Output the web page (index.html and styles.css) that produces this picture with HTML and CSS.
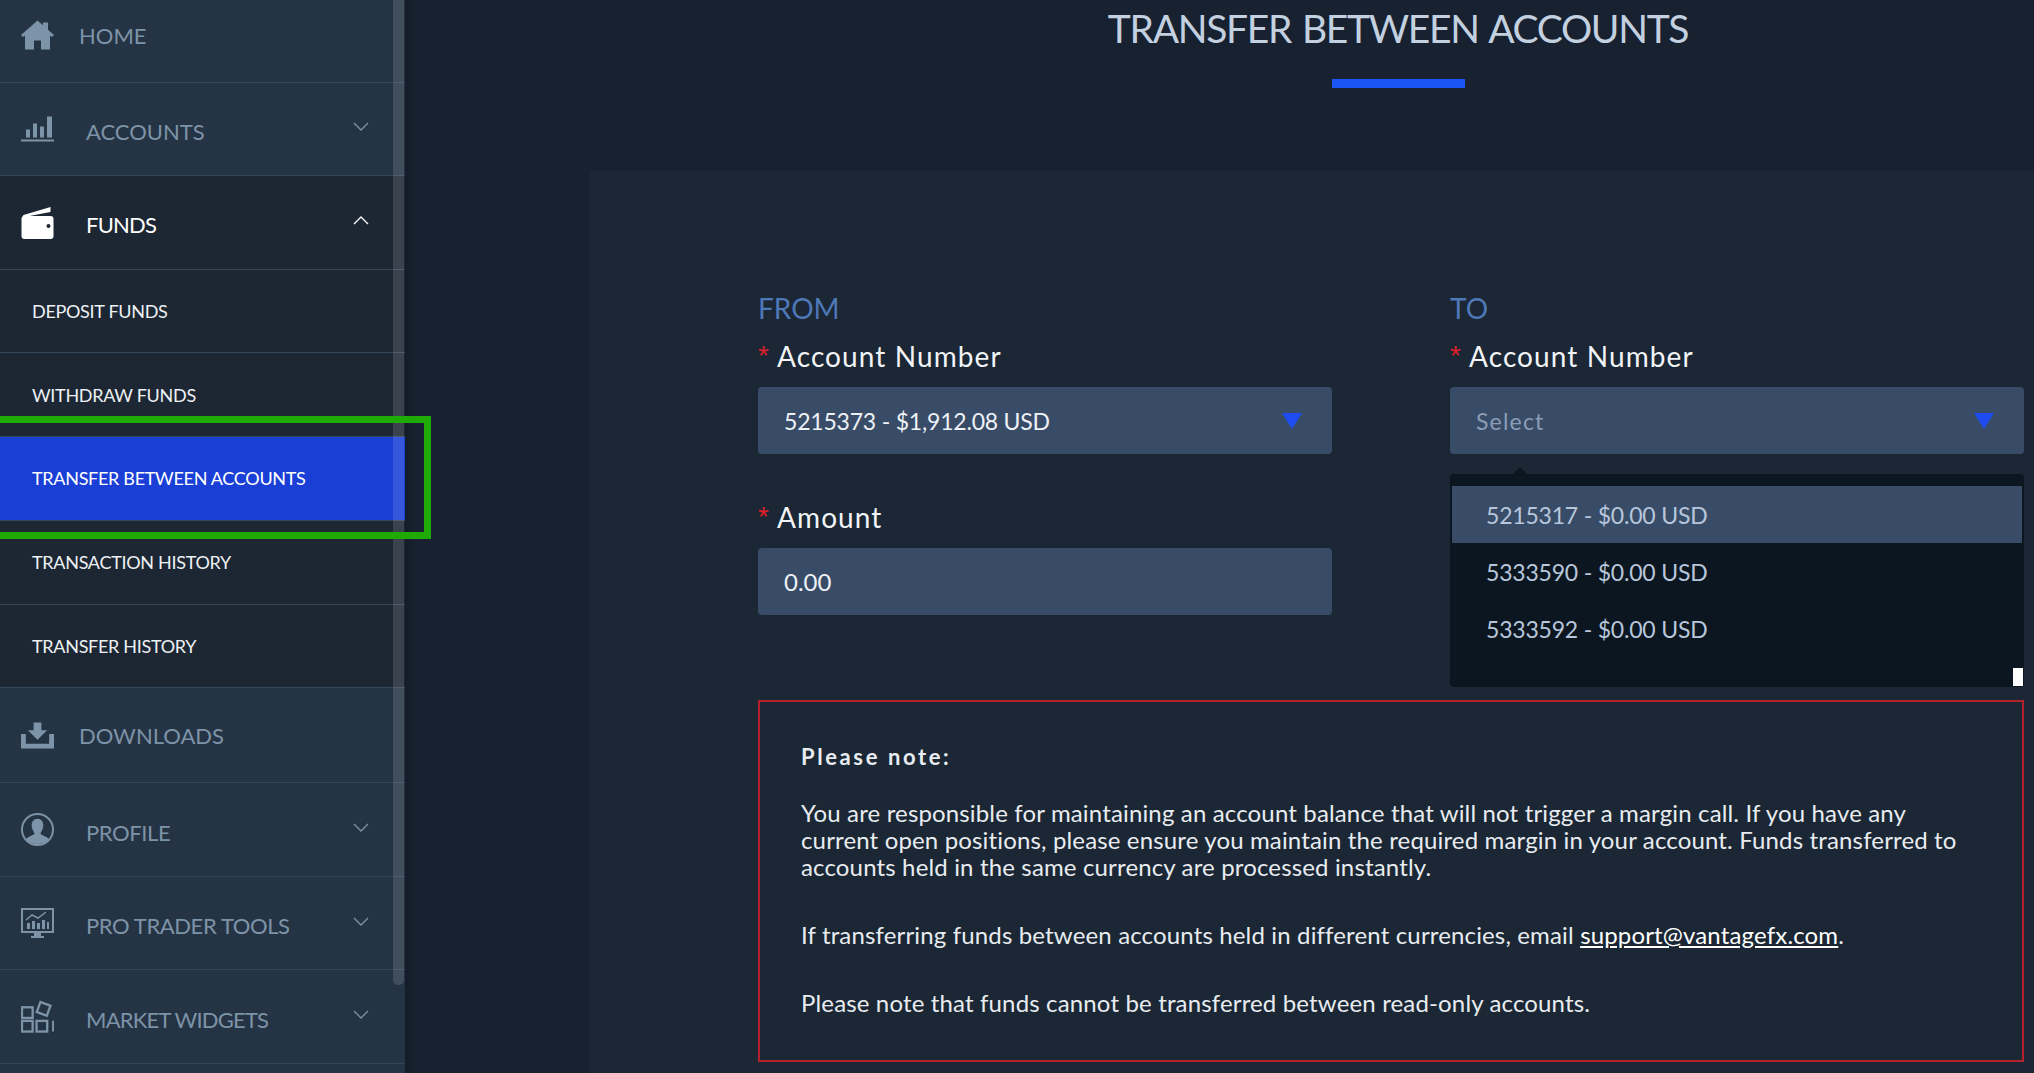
FILE: index.html
```html
<!DOCTYPE html>
<html lang="en">
<head>
    <meta charset="UTF-8">
    <meta name="viewport" content="width=device-width, initial-scale=1.0">
    <title>Transfer Between Accounts</title>
    <link rel="stylesheet" href="styles.css">
</head>
<body>
    <aside class="sidebar">
        <nav class="menu">
            <a class="menu-item menu-home">
                <svg class="menu-icon" viewBox="0 0 33 30"><path d="M16.500 0 L22 4.800 V2 H27 V9.200 L33 14.500 L31 16.500 L29 15 V29 H20 V20 H13 V29 H4 V15 L2 16.500 L0 14.500 Z" fill="currentColor"/></svg>
                <span class="menu-label">HOME</span>
            </a>
            <a class="menu-item">
                <svg class="menu-icon" viewBox="0 0 33 26"><path d="M5 14h4v8H5zM12 8h4v14h-4zM19 11h4v11h-4zM26 1h5v21h-5zM0 24h33v2H0z" fill="currentColor"/></svg>
                <span class="menu-label menu-label-wide">ACCOUNTS</span>
                <svg class="chevron" viewBox="0 0 16 9"><path d="M1 1l7 7 7-7" fill="none" stroke="currentColor" stroke-width="1.300"/></svg>
            </a>
            <a class="menu-item menu-open">
                <svg class="menu-icon" viewBox="0 0 32 33"><path d="M2 9 L29 1 V6 L8 10 H29 a3 3 0 0 1 3 3 V30 a3 3 0 0 1 -3 3 H3 a3 3 0 0 1 -3 -3 V12 Z" fill="currentColor"/><circle cx="27" cy="20" r="2" fill="#1c2733"/></svg>
                <span class="menu-label menu-label-wide menu-label-tight">FUNDS</span>
                <svg class="chevron" viewBox="0 0 16 9"><path d="M1 8l7-7 7 7" fill="none" stroke="currentColor" stroke-width="1.300"/></svg>
            </a>
            <div class="submenu">
                <a class="submenu-item">DEPOSIT FUNDS</a>
                <a class="submenu-item">WITHDRAW FUNDS</a>
                <a class="submenu-item active">TRANSFER BETWEEN ACCOUNTS</a>
                <a class="submenu-item">TRANSACTION HISTORY</a>
                <a class="submenu-item">TRANSFER HISTORY</a>
            </div>
            <a class="menu-item menu-tall">
                <svg class="menu-icon" viewBox="0 0 34 27"><path d="M13 0h8v8h6l-10 10L7 8h6zM0 12h5v10h24V12h5v15H0z" fill="currentColor"/></svg>
                <span class="menu-label">DOWNLOADS</span>
            </a>
            <a class="menu-item">
                <svg class="menu-icon" viewBox="0 0 34 34"><circle cx="17" cy="17" r="16" fill="none" stroke="currentColor" stroke-width="2"/><path d="M17 6c4 0 6 3 6 7s-2 6-3 8c1 2 7 3 9 6-3 3-7 5-12 5s-9-2-12-5c2-3 8-4 9-6-1-2-3-4-3-8s2-7 6-7z" fill="currentColor"/></svg>
                <span class="menu-label menu-label-wide menu-label-narrow">PROFILE</span>
                <svg class="chevron" viewBox="0 0 16 9"><path d="M1 1l7 7 7-7" fill="none" stroke="currentColor" stroke-width="1.300"/></svg>
            </a>
            <a class="menu-item">
                <svg class="menu-icon" viewBox="0 0 33 31"><path d="M0 0h33v25H0zM2 2v21h29V2z" fill="currentColor" fill-rule="evenodd"/><path d="M6 15h3v6H6zM11 13h3v8h-3zM16 15h3v6h-3zM21 12h3v9h-3zM26 14h2v7h-2z" fill="currentColor"/><path d="M5 12l6-5 6 3 8-6" fill="none" stroke="currentColor" stroke-width="1.500"/><path d="M13 25h7v3h3v2H10v-2h3z" fill="currentColor"/></svg>
                <span class="menu-label menu-label-wide menu-label-narrow">PRO TRADER TOOLS</span>
                <svg class="chevron" viewBox="0 0 16 9"><path d="M1 1l7 7 7-7" fill="none" stroke="currentColor" stroke-width="1.300"/></svg>
            </a>
            <a class="menu-item">
                <svg class="menu-icon" viewBox="0 0 34 33"><g fill="none" stroke="currentColor" stroke-width="2.400"><rect x="1" y="7" width="11" height="11"/><rect x="1" y="21" width="11" height="11"/><rect x="16" y="21" width="11" height="11"/><rect x="18" y="3" width="11" height="11" transform="rotate(20 23 8)"/></g><path d="M32 21h2v11h-2z" fill="currentColor"/></svg>
                <span class="menu-label menu-label-wide menu-label-tight">MARKET WIDGETS</span>
                <svg class="chevron" viewBox="0 0 16 9"><path d="M1 1l7 7 7-7" fill="none" stroke="currentColor" stroke-width="1.300"/></svg>
            </a>
        </nav>
        <div class="sidebar-scroll"></div>
        <div class="highlight-box"></div>
    </aside>

    <main class="content">
        <header class="page-head">
            <h1>TRANSFER BETWEEN ACCOUNTS</h1>
            <div class="title-bar"></div>
        </header>

        <section class="card">
            <div class="columns">
                <div class="column">
                    <h2 class="column-title">FROM</h2>
                    <div class="field">
                        <label class="field-label"><span class="star">*</span>Account Number</label>
                        <div class="input select">
                            <span>5215373 - $1,912.08 USD</span>
                            <svg class="caret" viewBox="0 0 20 16"><path d="M0 0h20L10 16z" fill="currentColor"/></svg>
                        </div>
                    </div>
                    <div class="field">
                        <label class="field-label"><span class="star">*</span>Amount</label>
                        <div class="input">0.00</div>
                    </div>
                </div>
                <div class="column column-to">
                    <h2 class="column-title">TO</h2>
                    <div class="field">
                        <label class="field-label"><span class="star">*</span>Account Number</label>
                        <div class="input select placeholder">
                            <span>Select</span>
                            <svg class="caret" viewBox="0 0 20 16"><path d="M0 0h20L10 16z" fill="currentColor"/></svg>
                        </div>
                    </div>
                    <div class="dropdown">
                        <div class="dropdown-item selected">5215317 - $0.00 USD</div>
                        <div class="dropdown-item">5333590 - $0.00 USD</div>
                        <div class="dropdown-item">5333592 - $0.00 USD</div>
                        <div class="dropdown-scroll"></div>
                    </div>
                </div>
            </div>

            <div class="note">
                <h3>Please note:</h3>
                <p>You are responsible for maintaining an account balance that will not trigger a margin call. If you have any current open positions, please ensure you maintain the required margin in your account. Funds transferred to accounts held in the same currency are processed instantly.</p>
                <p>If transferring funds between accounts held in different currencies, email <a class="note-link">support@vantagefx.com</a>.</p>
                <p>Please note that funds cannot be transferred between read-only accounts.</p>
            </div>
        </section>
    </main>
</body>
</html>
```

FILE: styles.css
```css
* {
    box-sizing: border-box;
}

html, body {
    height: 100%;
}

body {
    margin: 0;
    display: flex;
    overflow: hidden;
    font-family: "Lato", "Open Sans", sans-serif;
    background: #17212f;
    color: #fff;
}

/* sidebar */
.sidebar {
    position: relative;
    z-index: 1;
    flex: 0 0 405px;
    height: 100%;
    background: #253444;
    box-shadow: 3px 0 6px rgba(0, 0, 0, 0.18);
}

.menu {
    margin-top: -11px;
}

.menu-item {
    display: flex;
    align-items: center;
    height: 93.500px;
    padding: 0 36px 0 21px;
    color: #7d93a8;
    border-bottom: 1px solid #34475a;
}

.menu-open {
    background: #1c2733;
    color: #fff;
}

.menu-icon {
    flex: 0 0 33px;
    width: 33px;
    height: 33px;
}

.menu-label {
    margin-left: 25px;
    font-size: 22px;
}

.menu-label-wide {
    margin-left: 32px;
    margin-top: 5px;
}

.menu-label-narrow {
    letter-spacing: -0.400px;
}

.menu-label-tight {
    letter-spacing: -0.800px;
}

.chevron {
    width: 16px;
    height: 9px;
    margin-left: auto;
    margin-bottom: 4px;
}

.submenu {
    background: #1c2733;
}

.submenu-item {
    display: flex;
    align-items: center;
    height: 83.800px;
    padding: 0 32px;
    font-size: 18px;
    letter-spacing: -0.300px;
    color: #eef1f4;
    border-bottom: 1px solid #34475a;
}

.submenu-item.active {
    background: #1a3fd6;
    color: #fff;
}

.menu-tall {
    height: 95px;
}

.sidebar-scroll {
    position: absolute;
    top: 0;
    left: 393px;
    width: 11px;
    height: 985px;
    border-radius: 0 0 5px 5px;
    background: rgba(255, 255, 255, 0.13);
}

.highlight-box {
    position: absolute;
    top: 416px;
    left: -10px;
    width: 441px;
    height: 123px;
    border: 7px solid #1eab06;
}

/* main area */
.content {
    flex: 1;
    min-width: 0;
    display: flex;
    flex-direction: column;
    height: 100%;
}

.page-head {
    height: 171px;
    padding: 5px 0 0 357px;
    text-align: center;
}

.page-head h1 {
    margin: 0;
    font-size: 39px;
    font-weight: 400;
    letter-spacing: -1.300px;
    word-spacing: 2px;
    line-height: 46px;
    color: #c3d0e0;
}

.title-bar {
    width: 133px;
    height: 9px;
    margin: 28px auto 0;
    background: #1b56f5;
}

.card {
    flex: 1;
    margin-left: 185px;
    padding: 120px 10px 0 168px;
    background: #1b2734;
}

.columns {
    display: grid;
    grid-template-columns: 574px 574px;
    column-gap: 118px;
    height: 409px;
}

.column-to {
    position: relative;
}

.column-title {
    margin: 0;
    font-size: 28px;
    font-weight: 400;
    line-height: 34px;
    color: #4f78b8;
}

.field {
    margin-bottom: 32px;
}

.field-label {
    display: block;
    height: 62px;
    padding-top: 15px;
    font-size: 28px;
    letter-spacing: 1.100px;
    line-height: 32px;
    color: #f2f4f7;
}

.star {
    display: inline-block;
    width: 19px;
    font-family: "Liberation Sans", sans-serif;
    font-size: 28px;
    letter-spacing: 0;
    color: #dc1f2a;
    vertical-align: top;
}

.input {
    display: flex;
    align-items: center;
    justify-content: space-between;
    height: 67px;
    padding: 0 30px 0 26px;
    border-radius: 4px;
    font-size: 24px;
    background: #384c68;
    color: #eef1f5;
}

.select span {
    font-size: 23px;
    letter-spacing: -0.200px;
}

.placeholder {
    color: #8c9db5;
}

.placeholder span {
    letter-spacing: 1.200px;
}

.caret {
    width: 20px;
    height: 16px;
    color: #1f4cf0;
}

/* open list of the TO select */
.dropdown {
    position: absolute;
    top: 183px;
    left: 0;
    width: 100%;
    height: 213px;
    padding: 12px 2px 0;
    border-radius: 4px;
    background: #0b1620;
}

.dropdown::before {
    content: "";
    position: absolute;
    top: -7px;
    left: 63px;
    border-left: 7px solid transparent;
    border-right: 7px solid transparent;
    border-bottom: 7px solid #0b1620;
}

.dropdown-item {
    display: flex;
    align-items: center;
    height: 57px;
    padding-left: 34px;
    font-size: 23px;
    letter-spacing: -0.200px;
    color: #b7c6db;
}

.dropdown-item.selected {
    background: #384c68;
}

.dropdown-scroll {
    position: absolute;
    right: 1px;
    bottom: 1px;
    width: 10px;
    height: 18px;
    background: #fff;
}

/* note box */
.note {
    height: 362px;
    padding: 41px 40px 0 41px;
    border: 2px solid #b5202e;
    font-size: 24px;
    letter-spacing: 0.150px;
    line-height: 27px;
    color: #e8ecf1;
}

.note h3 {
    margin: 0 0 29px;
    font-size: 22px;
    font-weight: 700;
    letter-spacing: 2.600px;
    line-height: 27px;
}

.note p {
    margin: 0 0 41px;
}

.note-link {
    color: #fff;
    text-decoration: underline;
}
```
